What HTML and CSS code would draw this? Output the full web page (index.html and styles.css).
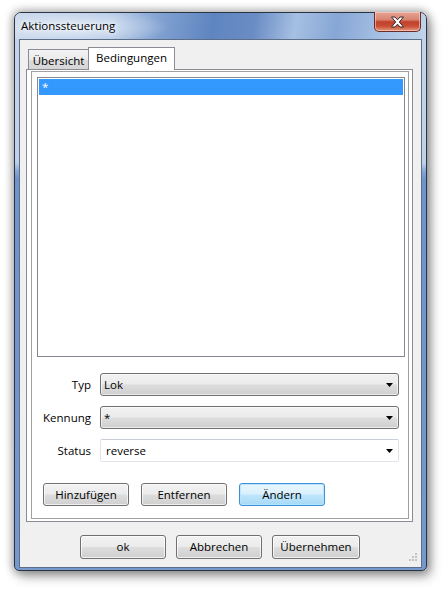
FILE: index.html
```html
<!DOCTYPE html>
<html lang="de">
<head>
<meta charset="utf-8">
<title>Aktionssteuerung</title>
<link rel="stylesheet" href="styles.css">
</head>
<body>
<div class="window">
  <div class="titlebar">
    <span class="title">Aktionssteuerung</span>
    <div class="close">
      <svg width="15" height="12" viewBox="0 0 15 12">
        <path d="M1.5 1 L5 1 L7.5 3.8 L10 1 L13.5 1 L9.3 6 L13.5 11 L10 11 L7.5 8.2 L5 11 L1.5 11 L5.7 6 Z" fill="#ffffff" stroke="#3b2a2a" stroke-width="1" stroke-linejoin="round"/>
      </svg>
    </div>
  </div>
  <div class="client">
    <div class="tabs">
      <div class="tab">Übersicht</div>
      <div class="tab active">Bedingungen</div>
    </div>
    <div class="panel">
      <div class="inner">
        <div class="list">
          <div class="row sel">*</div>
        </div>
        <div class="form">
          <span class="label">Typ</span>
          <div class="combo"><span class="val">Lok</span><svg class="arrow" width="7" height="4" viewBox="0 0 7 4"><path d="M0 0 H7 L3.5 4 Z" fill="#000"/></svg></div>
          <span class="label">Kennung</span>
          <div class="combo"><span class="val">*</span><svg class="arrow" width="7" height="4" viewBox="0 0 7 4"><path d="M0 0 H7 L3.5 4 Z" fill="#000"/></svg></div>
          <span class="label">Status</span>
          <div class="combo edit"><span class="val">reverse</span><svg class="arrow" width="7" height="4" viewBox="0 0 7 4"><path d="M0 0 H7 L3.5 4 Z" fill="#000"/></svg></div>
        </div>
        <div class="actions">
          <button class="btn">Hinzufügen</button>
          <button class="btn">Entfernen</button>
          <button class="btn focus">Ändern</button>
        </div>
      </div>
    </div>
    <div class="footer">
      <button class="btn big">ok</button>
      <button class="btn big">Abbrechen</button>
      <button class="btn big wide">Übernehmen</button>
    </div>
    <svg class="grip" width="9" height="9" viewBox="0 0 9 9">
      <rect x="6" y="0" width="2" height="2" fill="#c4c4c4"/>
      <rect x="3" y="3" width="2" height="2" fill="#c4c4c4"/>
      <rect x="6" y="3" width="2" height="2" fill="#c4c4c4"/>
      <rect x="0" y="6" width="2" height="2" fill="#c4c4c4"/>
      <rect x="3" y="6" width="2" height="2" fill="#c4c4c4"/>
      <rect x="6" y="6" width="2" height="2" fill="#c4c4c4"/>
    </svg>
  </div>
</div>
</body>
</html>
```

FILE: styles.css
```css
* { box-sizing: border-box; }

html, body {
  margin: 0;
  padding: 0;
  background: #ffffff;
}

body {
  font-family: "Open Sans", "Noto Sans", "DejaVu Sans", sans-serif;
  font-size: 11.5px;
  color: #000;
  width: 446px;
  height: 592px;
  overflow: hidden;
}

.window {
  position: relative;
  margin: 12px 0 0 14px;
  width: 413px;
  height: 559px;
  border: 1px solid #2a3442;
  border-radius: 7px 7px 5px 5px;
  padding: 0 4px 2px 4px;
  background:
    linear-gradient(to bottom, #c3d4eb 0, #bfd1ea 150px, #88a7d6 158px, #6f93cb 166px, #7598cd 100%);
  box-shadow: 0 0 9px 2px rgba(0,0,0,0.32), 4px 6px 12px rgba(0,0,0,0.28);
}

.titlebar {
  height: 26px;
  margin: 0 -4px;
  padding-left: 6px;
  border-radius: 6px 6px 0 0;
  background:
    radial-gradient(ellipse 95px 18px at 60px 14px, rgba(232,240,250,0.85), rgba(232,240,250,0) 100%),
    linear-gradient(100deg, #c9d7ea 0%, #b3c8e5 24%, #7f9fd0 36%, #5f85c0 48%, #6a8cc4 58%, #a6c0e3 68%, #86a6d5 78%, #aac3e5 90%, #c0d3eb 100%);
  display: flex;
  align-items: center;
}

.title {
  font-size: 11.5px;
  color: #000;
  text-shadow: 0 0 8px #fff, 0 0 4px #fff;
  margin-top: -1px;
}

.close {
  position: absolute;
  top: -1px;
  right: 5px;
  width: 47px;
  height: 20px;
  border: 1px solid #6b2b26;
  border-top: none;
  border-radius: 0 0 5px 5px;
  background: linear-gradient(to bottom, #e8a493 0%, #d88471 40%, #c0402c 52%, #c94f36 75%, #e39a7f 100%);
  box-shadow: inset 0 0 0 1px rgba(255,220,210,0.55);
  display: flex;
  align-items: center;
  justify-content: center;
}

.client {
  position: relative;
  width: 403px;
  height: 529px;
  border: 1px solid #5d6f88;
  background: #f0f0f0;
  padding: 7px 0 0 6px;
}

.tabs {
  display: flex;
  height: 22px;
  padding-left: 2px;
  align-items: flex-end;
  position: relative;
  z-index: 2;
}

.tab {
  height: 20px;
  width: 61px;
  border: 1px solid #898c95;
  border-bottom: none;
  background: linear-gradient(to bottom, #f3f3f3 0%, #ebebeb 50%, #dcdcdc 51%, #d6d6d6 100%);
  text-align: center;
  line-height: 19px;
  padding-top: 1px;
}

.tab.active {
  width: 87px;
  height: 23px;
  margin-left: -1px;
  margin-bottom: -1px;
  background: #ffffff;
  line-height: 20px;
  padding-top: 0;
}

.panel {
  width: 387px;
  height: 453px;
  border: 1px solid #898c95;
  background: #ffffff;
  padding: 1px 3px 2px 4px;
}

.inner {
  height: 448px;
  border: 1px solid #a0a0a0;
  padding: 5px 3px 0 5px;
}

.list {
  height: 280px;
  border: 1px solid #828790;
  background: #fff;
  padding: 1px;
}

.row {
  height: 16px;
  line-height: 15px;
  padding-left: 3px;
}

.row.sel {
  background: #3399ff;
  color: #fff;
}

.form {
  display: grid;
  grid-template-columns: 54px 299px;
  column-gap: 9px;
  row-gap: 10px;
  margin-top: 16px;
  align-items: center;
}

.label {
  text-align: right;
}

.combo {
  height: 23px;
  border: 1px solid #707070;
  border-radius: 3px;
  background: linear-gradient(to bottom, #f2f2f2 0%, #ebebeb 48%, #dddddd 52%, #cfcfcf 100%);
  box-shadow: inset 0 0 0 1px rgba(255,255,255,0.6);
  display: flex;
  align-items: center;
  padding: 0 4px 0 3px;
}

.combo.edit {
  background: #fff;
  border: 1px solid #e0e4ea;
  border-top-color: #c9cfd8;
  border-radius: 2px;
  box-shadow: none;
  padding-left: 5px;
}

.val {
  flex: 1;
  margin-top: -1px;
}

.arrow {
  display: block;
  margin-right: 1px;
}

.actions {
  display: flex;
  gap: 12px;
  margin-top: 21px;
  padding-left: 6px;
}

.btn {
  font-family: inherit;
  font-size: 11.5px;
  color: #000;
  width: 86px;
  height: 23px;
  padding: 0 0 1px 0;
  border: 1px solid #707070;
  border-radius: 3px;
  background: linear-gradient(to bottom, #f2f2f2 0%, #ebebeb 48%, #dddddd 52%, #cfcfcf 100%);
  box-shadow: inset 0 0 0 1px rgba(255,255,255,0.7);
  text-align: center;
}

.btn.focus {
  border-color: #3c8fd8;
  background: linear-gradient(to bottom, #eaf6fd 0%, #d9f0fc 48%, #bee6fd 52%, #a7d9f5 100%);
  box-shadow: inset 0 0 0 1px rgba(180,230,255,0.9);
}

.footer {
  display: flex;
  gap: 10px;
  margin-top: 13px;
  padding-left: 54px;
}

.btn.big {
  height: 24px;
}

.btn.wide {
  width: 88px;
}

.grip {
  position: absolute;
  right: 3px;
  bottom: 5px;
}
```
